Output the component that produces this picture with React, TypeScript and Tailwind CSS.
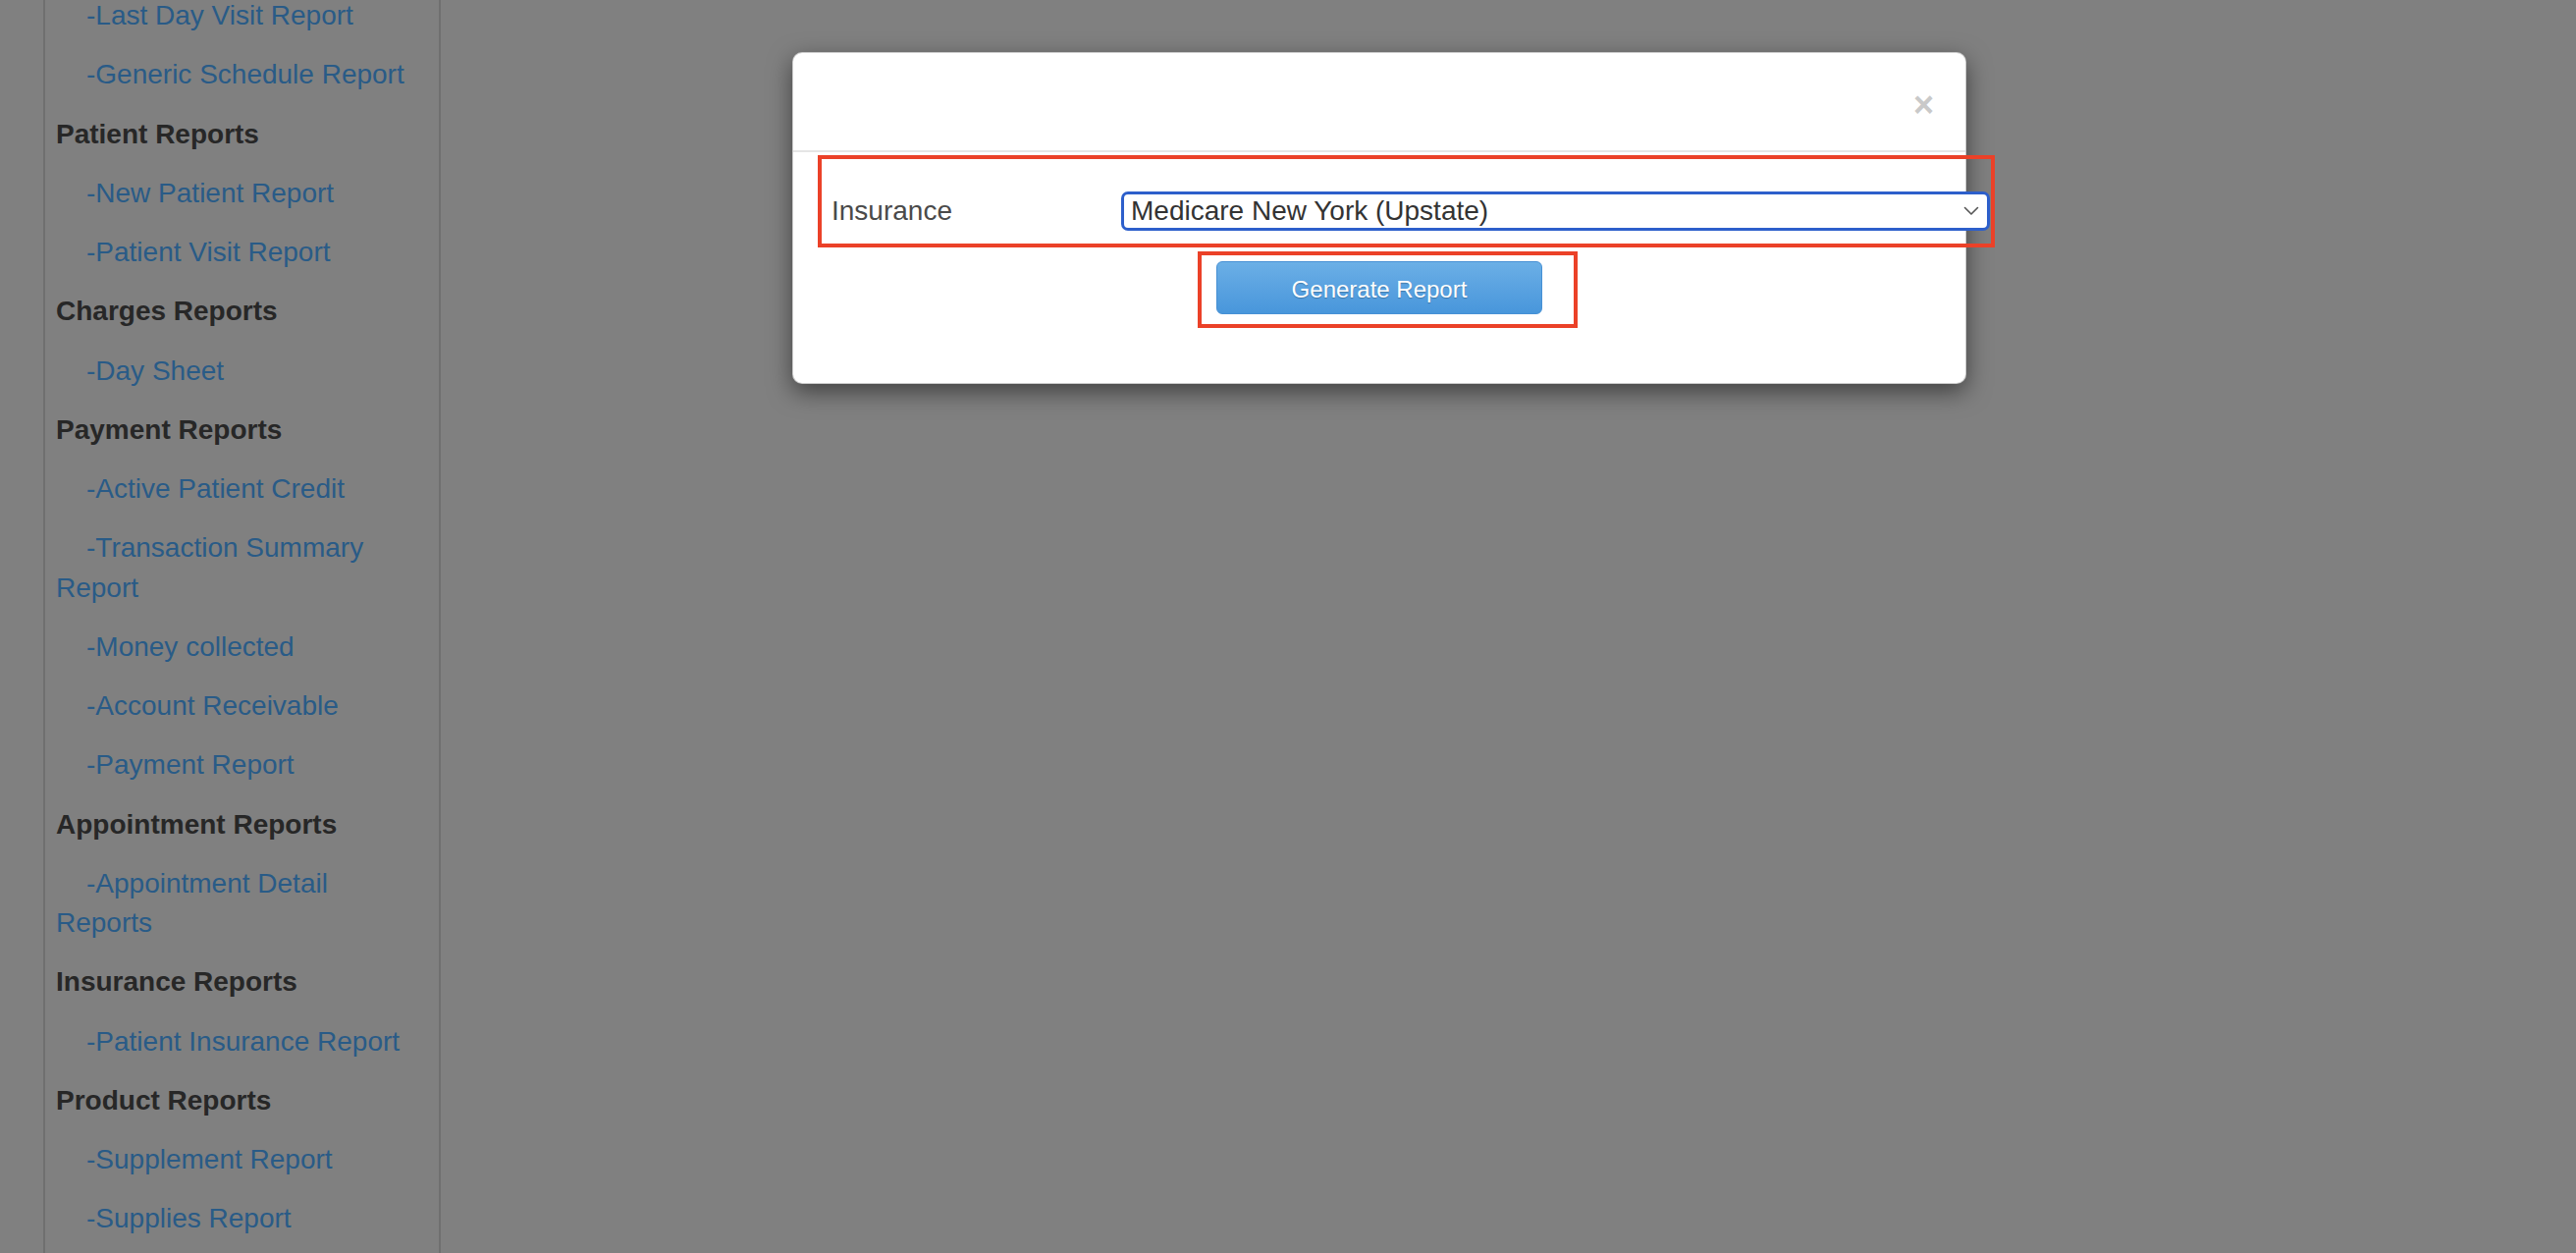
import React from "react";

type Item = { kind: "h" | "a"; text: string };

const items: Item[] = [
  { kind: "a", text: "-Last Day Visit Report" },
  { kind: "a", text: "-Generic Schedule Report" },
  { kind: "h", text: "Patient Reports" },
  { kind: "a", text: "-New Patient Report" },
  { kind: "a", text: "-Patient Visit Report" },
  { kind: "h", text: "Charges Reports" },
  { kind: "a", text: "-Day Sheet" },
  { kind: "h", text: "Payment Reports" },
  { kind: "a", text: "-Active Patient Credit" },
  { kind: "a", text: "-Transaction Summary Report" },
  { kind: "a", text: "-Money collected" },
  { kind: "a", text: "-Account Receivable" },
  { kind: "a", text: "-Payment Report" },
  { kind: "h", text: "Appointment Reports" },
  { kind: "a", text: "-Appointment Detail Reports" },
  { kind: "h", text: "Insurance Reports" },
  { kind: "a", text: "-Patient Insurance Report" },
  { kind: "h", text: "Product Reports" },
  { kind: "a", text: "-Supplement Report" },
  { kind: "a", text: "-Supplies Report" },
];

export default function App() {
  return (
    <div
      className="relative h-[1276px] w-full overflow-hidden bg-[#808080]"
      style={{ fontFamily: '"Liberation Sans", Arial, Helvetica, sans-serif' }}
    >
      {/* Sidebar */}
      <div className="ml-[44px] flex h-full w-[405px] flex-col border-x-2 border-[#6f6f6f] pl-[11px] pr-[15px]">
        <ul className="-mt-[14px] flex flex-col">
          {items.map((it, i) =>
            it.kind === "h" ? (
              <li
                key={i}
                className="py-[10px] text-[28px] font-bold leading-[40.25px] text-[#272727]"
              >
                {it.text}
              </li>
            ) : (
              <li
                key={i}
                className="py-[10px] indent-[31px] text-[28px] leading-[40.25px] text-[#295b87]"
              >
                {it.text}
              </li>
            )
          )}
        </ul>
      </div>

      {/* Modal */}
      <div className="absolute left-[807px] top-[53px] flex w-[1196px] flex-col rounded-[10px] border border-black/20 bg-white shadow-[0_8px_25px_rgba(0,0,0,0.5)]">
        <div className="relative h-[99px]">
          <span className="absolute right-[32px] top-[33px] text-[36px] font-bold leading-[40px] text-[#c9c9c9]">
            ×
          </span>
        </div>
        <div className="h-[2px] bg-[#e5e5e5]" />
        <div className="pl-[25px] pt-[3px] pb-[56px]">
          {/* highlighted row */}
          <div className="flex h-[94px] w-[1199px] items-end border-4 border-[#eb4128] pb-[13px] pr-[1px]">
            <div className="flex h-[40px] w-full items-center">
              <span className="w-[305px] pl-[10px] text-[28px] leading-[40px] text-[#4a4a4a]">
                Insurance
              </span>
              <div className="flex h-[40px] flex-1 items-center justify-between rounded-[7px] border-[3px] border-[#2d5fcb] bg-white pl-[7px] pr-[8px]">
                <span className="text-[28px] leading-[34px] text-[#333333]">
                  Medicare New York (Upstate)
                </span>
                <svg width="16" height="10" viewBox="0 0 16 10" fill="none">
                  <path
                    d="M1.5 1.5 L8 8 L14.5 1.5"
                    stroke="#555555"
                    strokeWidth="1.6"
                    strokeLinecap="round"
                    strokeLinejoin="round"
                  />
                </svg>
              </div>
            </div>
          </div>
          {/* highlighted button */}
          <div className="ml-[387px] mt-[4px] h-[78px] w-[387px] border-4 border-[#eb4128] pl-[15px] pt-[6px]">
            <button
              className="flex h-[54px] w-[332px] items-center justify-center rounded-[6px] border border-[#4690d4] bg-gradient-to-b from-[#6bafe6] to-[#4896db] pt-[4px] text-[24px] text-white [text-shadow:0_1px_1px_rgba(0,0,0,0.25)]"
              style={{ fontFamily: '"Liberation Sans", Arial, Helvetica, sans-serif' }}
            >
              Generate Report
            </button>
          </div>
        </div>
      </div>
    </div>
  );
}
